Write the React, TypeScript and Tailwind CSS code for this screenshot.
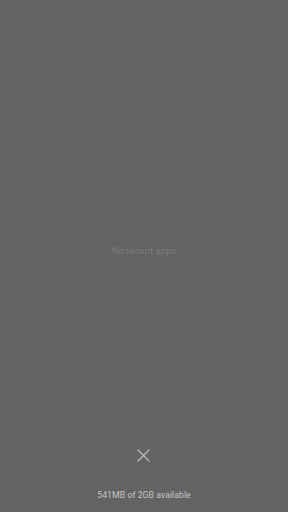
export default function App() {
  return (
    <div
      className="flex h-[512px] w-[288px] flex-col items-center bg-[#636363] pt-[245px]"
      style={{ fontFamily: "Roboto, 'Liberation Sans', sans-serif" }}
    >
      <span className="text-[9.5px] leading-[12px] text-[#7c7c7c]">No recent apps</span>
      <div className="flex-1" />
      <div className="flex flex-col items-center pb-[11px]">
        <svg width="13" height="13" viewBox="0 0 13 13" className="mb-[27px]">
          <path d="M1 1L12 12M12 1L1 12" stroke="#b8b8b8" strokeWidth="1.4" strokeLinecap="round" />
        </svg>
        <span className="text-[8.8px] leading-[12px] text-[#c4c4c4]">541MB of 2GB available</span>
      </div>
    </div>
  );
}
